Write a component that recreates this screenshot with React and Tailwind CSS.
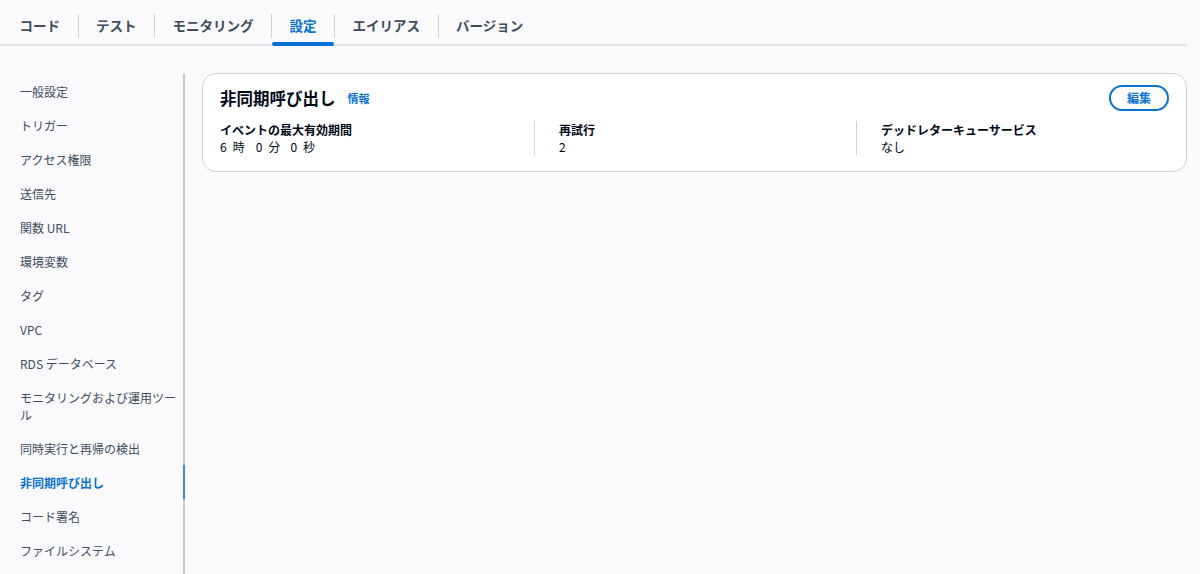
export default function App() {
  const tabs = ["コード", "テスト", "モニタリング", "設定", "エイリアス", "バージョン"];
  const side = [
    "一般設定",
    "トリガー",
    "アクセス権限",
    "送信先",
    "関数 URL",
    "環境変数",
    "タグ",
    "VPC",
    "RDS データベース",
    "モニタリングおよび運用ツール",
    "同時実行と再帰の検出",
    "非同期呼び出し",
    "コード署名",
    "ファイルシステム",
  ];
  const font = { fontFamily: '"Noto Sans CJK JP", "Noto Sans", sans-serif' };
  return (
    <div
      className="min-h-screen h-screen overflow-hidden flex flex-col bg-[#fafafc] pr-[13px] text-[#000716]"
      style={font}
    >
      <div className="flex h-[46px] pt-2 pl-[2px] border-b-2 border-[#e3e3e7] shrink-0">
        {tabs.map((t, i) => (
          <div key={t} className="flex items-stretch">
            {i > 0 && <div className="w-px h-6 bg-[#d1d1d6] self-center" />}
            <div
              className={
                "relative flex items-center px-[17.5px] text-[13.5px] font-bold leading-none " +
                (t === "設定" ? "text-[#0972d3]" : "text-[#414d5c]")
              }
            >
              {t}
              {t === "設定" && (
                <div className="absolute left-0 right-0 bottom-[-2px] h-[4px] rounded-full bg-[#0972d3] z-10" />
              )}
            </div>
          </div>
        ))}
      </div>
      <div className="flex flex-1 min-h-0">
        <div className="w-[185px] shrink-0 mt-[28px] border-r-2 border-[#c6c6cd]">
          {side.map((s) => (
            <div
              key={s}
              className={
                "relative pl-5 pr-[3px] py-[8.5px] text-[12px] leading-[17px] " +
                (s === "非同期呼び出し" ? "text-[#0972d3] font-bold" : "text-[#414d5c]")
              }
            >
              {s}
              {s === "非同期呼び出し" && (
                <div className="absolute top-0 bottom-0 right-[-2px] w-[2px] bg-[#3a86e0]" />
              )}
            </div>
          ))}
        </div>
        <div className="flex-1 pl-[17px] pt-[27px]">
          <div className="bg-white border border-[#d1d1d6] rounded-[14px] px-[17px] pt-[11px] pb-[16px]">
            <div className="flex items-center justify-between h-[26px]">
              <div className="flex items-center">
                <span className="text-[16.5px] font-bold leading-none">非同期呼び出し</span>
                <span className="ml-3 text-[11px] font-bold text-[#0972d3] leading-none">情報</span>
              </div>
              <button className="w-[60px] h-[26px] rounded-full border-2 border-[#0972d3] text-[#0972d3] text-[12px] font-bold leading-none">
                編集
              </button>
            </div>
            <div className="grid grid-cols-[314px_322px_1fr] mt-[10px] text-[12px] leading-[17px]">
              <div>
                <div className="font-bold">イベントの最大有効期間</div>
                <div>
                  <span>6</span>
                  <span className="ml-[6px]">時</span>
                  <span className="ml-[11px]">0</span>
                  <span className="ml-[6px]">分</span>
                  <span className="ml-[10px]">0</span>
                  <span className="ml-[6px]">秒</span>
                </div>
              </div>
              <div className="border-l border-[#d1d1d6] pl-[24px]">
                <div className="font-bold">再試行</div>
                <div>2</div>
              </div>
              <div className="border-l border-[#d1d1d6] pl-[24px]">
                <div className="font-bold">デッドレターキューサービス</div>
                <div>なし</div>
              </div>
            </div>
          </div>
        </div>
      </div>
    </div>
  );
}
